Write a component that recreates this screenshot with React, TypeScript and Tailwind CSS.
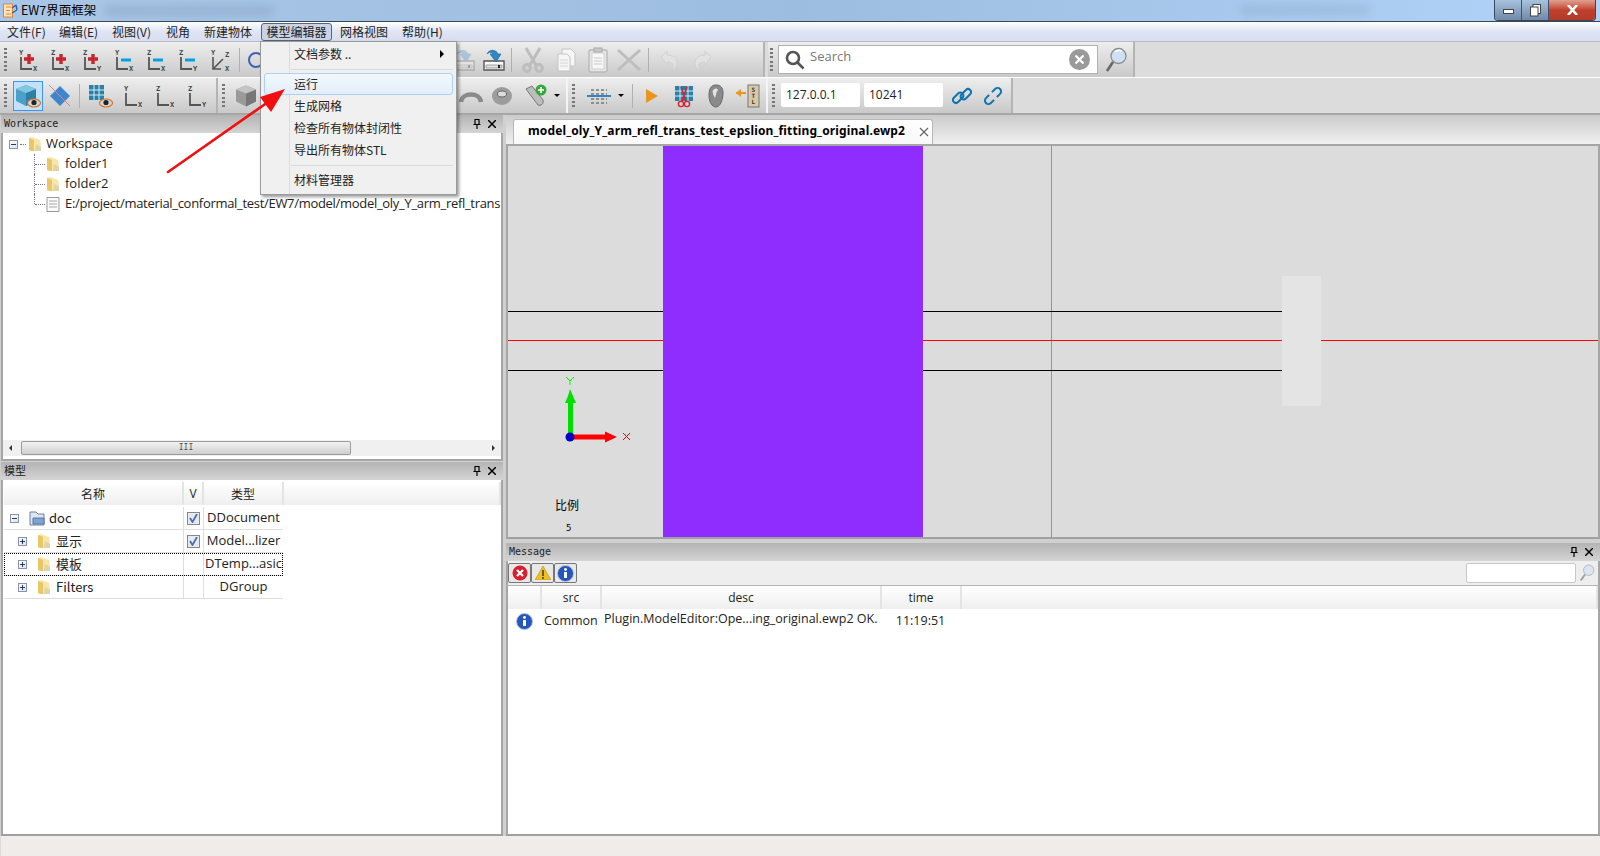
import { ReactNode } from "react";

const FONT = "[font-family:'Open_Sans','Noto_Sans_CJK_SC',sans-serif]";
const CJK = "[font-family:'Noto_Sans_CJK_SC','Open_Sans',sans-serif]";

function Grip() {
  return (
    <div className="flex h-[24px] w-[4px] flex-col justify-between">
      {[0, 1, 2, 3, 4, 5].map((i) => (
        <span key={i} className="h-[2px] w-[3px] bg-[#77777a]" />
      ))}
    </div>
  );
}

function Sep() {
  return <div className="mx-[2px] h-[24px] w-px bg-[#b0b0b0]" />;
}

function DropArrow() {
  return <div className="h-0 w-0 border-x-[3px] border-t-[3px] border-x-transparent border-t-black" />;
}

function AxisIcon({ v, h, sign }: { v: string; h: string; sign?: "plus" | "minus" | "diag" }) {
  return (
    <svg width="24" height="24" viewBox="0 0 24 24">
      <text x="3" y="7" fontSize="7" fontFamily="DejaVu Sans Mono" fontWeight="700" fill="#444">{v}</text>
      {sign === "diag" ? (
        <>
          <path d="M5 9v12h8M5 21l10-10" fill="none" stroke="#555" strokeWidth="1.6" />
          <text x="17" y="9" fontSize="7" fontFamily="DejaVu Sans Mono" fontWeight="700" fill="#444">Z</text>
        </>
      ) : (
        <path d="M5 9v12h11" fill="none" stroke="#555" strokeWidth="1.8" />
      )}
      <text x="17" y="23" fontSize="7" fontFamily="DejaVu Sans Mono" fontWeight="700" fill="#444">{h}</text>
      {sign === "plus" && <path d="M13 6v10M8 11h10" stroke="#c1272d" strokeWidth="3.4" />}
      {sign === "minus" && <path d="M9 12h10" stroke="#00a0e3" strokeWidth="3" />}
    </svg>
  );
}

function Eye() {
  return (
    <g>
      <ellipse cx="19" cy="19" rx="6.5" ry="4" fill="#cdd8dd" stroke="#e0701c" strokeWidth="1.2" />
      <circle cx="19" cy="18.5" r="2.6" fill="#222" />
    </g>
  );
}

function Cube({ c1, c2, c3 }: { c1: string; c2: string; c3: string }) {
  return (
    <g>
      <path d="M11 1l10 4v12l-10 5L1 17V5z" fill={c1} />
      <path d="M11 9l10-4v12l-10 5z" fill={c2} />
      <path d="M11 9L1 5l10-4 10 4z" fill={c3} />
    </g>
  );
}

function Cut({ color = "#bdbdbd" }: { color?: string }) {
  return (
    <svg width="24" height="26" viewBox="0 0 24 26" fill="none" stroke={color} strokeWidth="3">
      <path d="M5 1l10 17M19 1L9 18" />
      <circle cx="6" cy="21" r="3.4" />
      <circle cx="18" cy="21" r="3.4" />
    </svg>
  );
}

function Save({ faded }: { faded?: boolean }) {
  return (
    <svg width="24" height="24" viewBox="0 0 24 24" className={faded ? "opacity-30" : ""}>
      <path d="M2 13h20v9H2z" fill="#fff" stroke="#555" strokeWidth="1.4" />
      <path d="M4 17h16v3H4z" fill="#e4e4e4" stroke="#777" strokeWidth=".7" />
      <path d="M16 17h2v3h-2z" fill="#222" />
      <path d="M5 6c2-5 9-5 11 0h3l-5 8-6-8h3c-1-2-4-2-6 0z" fill="#2f86c5" stroke="#1d6396" strokeWidth=".6" />
    </svg>
  );
}

function PageIcon() {
  return (
    <svg width="20" height="24" viewBox="0 0 20 24" fill="none">
      <path d="M5 1h9l4 4v13H5z" fill="#f6f6f6" stroke="#c4c4c4" />
      <path d="M1 6h9l3 3v14H1z" fill="#f6f6f6" stroke="#c4c4c4" />
      <path d="M3 12h8M3 15h8M3 18h8" stroke="#d4d4d4" />
    </svg>
  );
}

function Paste() {
  return (
    <svg width="20" height="26" viewBox="0 0 20 26" fill="none">
      <rect x="1" y="3" width="18" height="22" rx="2" fill="#e6e6e6" stroke="#b8b8b8" strokeWidth="1.4" />
      <rect x="4" y="6" width="12" height="16" fill="#f8f8f8" stroke="#cfcfcf" />
      <rect x="6" y="1" width="8" height="4" fill="#c8c8c8" stroke="#aaa" />
      <path d="M6 11h8M6 14h8M6 17h8" stroke="#c8c8c8" />
    </svg>
  );
}

function CurveArrow({ flip }: { flip?: boolean }) {
  return (
    <svg width="20" height="22" viewBox="0 0 20 22" className={flip ? "-scale-x-100" : ""} fill="none">
      <path d="M2 8l6-6v4c6 0 10 3 10 8s-3 6-6 7c2-2 3-4 2-6-1-1-3-2-6-2v3z" fill="#e2e2e2" stroke="#d0d0d0" />
    </svg>
  );
}

function Magnifier({ faint }: { faint?: boolean }) {
  return (
    <svg width="22" height="26" viewBox="0 0 22 26" className={faint ? "opacity-60" : ""}>
      <circle cx="13.5" cy="9" r="7.5" fill="#cfe0f5" stroke="#8d8d8d" strokeWidth="1.3" />
      <path d="M10 5c2-2 5-2 7-1" stroke="#fff" strokeWidth="1.5" fill="none" />
      <path d="M8 15L2 24" stroke="#666" strokeWidth="2.6" />
    </svg>
  );
}

function LinkIcon({ broken }: { broken?: boolean }) {
  return (
    <svg width="20" height="20" viewBox="0 0 20 20" fill="none" stroke="#0f75b0" strokeWidth="2">
      {broken ? (
        <g transform="rotate(-45 10 10)">
          <path d="M8 6.5H3.5a3.5 3.5 0 0 0 0 7H8" />
          <path d="M12 6.5h4.500a3.500 3.500 0 0 1 0 7H12" />
        </g>
      ) : (
        <g transform="rotate(-45 10 10)">
          <rect x="0" y="5.500" width="12" height="6" rx="3" />
          <rect x="8" y="8.500" width="12" height="6" rx="3" />
        </g>
      )}
    </svg>
  );
}

function Tool({ w = 32, children }: { w?: number; children: ReactNode }) {
  return (
    <div className="flex h-[30px] shrink-0 items-center justify-center" style={{ width: w }}>
      {children}
    </div>
  );
}

function ToolBar({ width, children }: { width: number; children: ReactNode }) {
  return (
    <div
      className="flex h-full shrink-0 items-center border-r-2 border-r-[#b4b4b4] bg-gradient-to-b from-[#eeeeee] to-[#c9c9c9] pl-[4px]"
      style={{ width }}
    >
      {children}
    </div>
  );
}

function FolderIcon() {
  return (
    <svg width="14" height="16" viewBox="0 0 14 16">
      <path d="M1 2l3-1 8 3c1 3 1 8 1 11H4L1 14z" fill="#f7e6a6" />
      <path d="M4 3l2 1v11H4c-1 0-3-1-3-1V2z" fill="#e8c767" />
      <path d="M8 8l5 3v4H7z" fill="#d7cfae" opacity=".8" />
    </svg>
  );
}

function PanelTitle({ title, mono, close = true }: { title: string; mono?: boolean; close?: boolean }) {
  return (
    <div className="flex h-[18px] shrink-0 items-center justify-between bg-gradient-to-b from-[#b4b4b4] to-[#d4d4d4] pl-[3px] pr-[7px]">
      <span className={mono ? "-mt-[2px] font-['DejaVu_Sans_Mono',monospace] text-[10px] text-[#222]" : `-mt-[2px] ${CJK} text-[11px] text-[#222]`}>{title}</span>
      {close && (
        <div className="flex items-center gap-[7px]">
          <svg width="8" height="10" viewBox="0 0 8 10" fill="none" stroke="#000" strokeWidth="1.2">
            <path d="M2 .5h4v5H2zM.5 5.5h7M4 6v4" />
          </svg>
          <svg width="8" height="8" viewBox="0 0 8 8" stroke="#000" strokeWidth="1.5">
            <path d="M0 0l8 8M8 0L0 8" />
          </svg>
        </div>
      )}
    </div>
  );
}

function ExpandBox({ open }: { open?: boolean }) {
  return (
    <div className="relative h-[9px] w-[9px] shrink-0 border border-[#8a94a6] bg-gradient-to-br from-white to-[#dde2ea]">
      <span className="absolute left-[1px] top-[3px] h-px w-[5px] bg-[#1c3d6e]" />
      {!open && <span className="absolute left-[3px] top-[1px] h-[5px] w-px bg-[#1c3d6e]" />}
    </div>
  );
}

function TreeChild({ label, icon, last }: { label: string; icon: ReactNode; last?: boolean }) {
  return (
    <div className="relative flex h-[20px] items-center pl-[43px]">
      <span className={`absolute left-[31px] top-0 w-px border-l border-dotted border-[#777] ${last ? "h-[10px]" : "h-[20px]"}`} />
      <span className="absolute left-[32px] top-[10px] h-px w-[10px] border-t border-dotted border-[#777]" />
      <span className="flex w-[19px] shrink-0 justify-start">{icon}</span>
      <span className={`whitespace-nowrap text-[13px] text-[#222] ${last ? "tracking-[-0.3px]" : ""}`}>{label}</span>
    </div>
  );
}

function Check() {
  return (
    <div className="flex h-[13px] w-[13px] items-center justify-center border border-[#888] bg-[#e8e8f0]">
      <svg width="9" height="9" viewBox="0 0 9 9" fill="none" stroke="#4a6fb0" strokeWidth="1.8">
        <path d="M1 4l2.5 4L8 0" />
      </svg>
    </div>
  );
}

function ModelRow({ name, type, level, checked, open, icon, selected }: {
  name: string; type: string; level: number; checked?: boolean; open?: boolean; icon: ReactNode; selected?: boolean;
}) {
  return (
    <div className={`flex h-[23px] w-[279px] items-center border-b border-[#dedede] text-[13px] text-[#222] ${selected ? "outline-1 -outline-offset-1 outline-dotted outline-black" : ""}`}>
      <div className={`flex h-full w-[180px] shrink-0 items-center border-r border-[#dedede] ${level === 0 ? "pl-[6px]" : "pl-[14px]"}`}>
        <ExpandBox open={open} />
        <span className={`flex justify-center ${level === 0 ? "ml-[8px] w-[20px]" : "ml-[9px] w-[16px]"}`}>{icon}</span>
        <span className={`${level === 0 ? "ml-[2px]" : "ml-[4px]"} ${CJK}`}>{name}</span>
      </div>
      <div className="flex h-full w-[20px] shrink-0 items-center justify-center border-r border-[#dedede]">
        {checked && <Check />}
      </div>
      <div className="flex h-full flex-1 items-center justify-center whitespace-nowrap">{type}</div>
    </div>
  );
}

function HeaderCell({ width, children }: { width?: number; children?: ReactNode }) {
  return (
    <div
      className={`flex h-full items-center justify-center border-r-2 border-[#e4e4e4] text-[12px] text-[#222] ${width ? "shrink-0" : "flex-1 border-r-0"}`}
      style={width ? { width } : undefined}
    >
      {children}
    </div>
  );
}

function InfoIcon({ size = 17 }: { size?: number }) {
  return (
    <svg width={size} height={size} viewBox="0 0 17 17">
      <circle cx="8.5" cy="8.5" r="8" fill="#2555c0" stroke="#b8c4de" />
      <circle cx="8.5" cy="4.5" r="1.4" fill="#fff" />
      <path d="M7 7h3v6H7z" fill="#fff" />
    </svg>
  );
}

function MenuRow({ label, active, arrow }: { label: string; active?: boolean; arrow?: boolean }) {
  return (
    <div className={`relative mx-[3px] flex h-[22px] items-center rounded-[3px] text-[12px] text-[#222] ${active ? "border border-[#aed0f2] bg-gradient-to-b from-[#f2f7fd] to-[#e3eefa] pl-[29px]" : "pl-[30px]"}`}>
      {label}
      {arrow && <span className="absolute right-[9px] h-0 w-0 border-y-[4px] border-l-[4px] border-y-transparent border-l-black" />}
    </div>
  );
}

function MenuSep() {
  return <div className="my-[3.5px] ml-[30px] mr-[3px] h-px bg-[#d9d9d9]" />;
}

const menus = [
  { label: "文件(F)", w: 52 },
  { label: "编辑(E)", w: 53 },
  { label: "视图(V)", w: 54 },
  { label: "视角", w: 38 },
  { label: "新建物体", w: 57 },
];

export default function App() {
  return (
    <div className={`relative flex h-[856px] w-[1600px] flex-col overflow-hidden bg-[#dcdcdc] ${FONT}`}>
      {/* title bar */}
      <div className="relative flex h-[21px] shrink-0 items-center bg-gradient-to-r from-[#a9c6e6] via-[#9dbde0] to-[#b0d3f7] pl-[3px]">
        <svg width="15" height="15" viewBox="0 0 15 15">
          <rect x=".5" y="1" width="9" height="13" fill="#fbe3c0" stroke="#e8841c" />
          <path d="M3 4h5M3 7.5h4M3 11h5" stroke="#e8841c" strokeWidth="1.2" />
          <path d="M9 5l4-3M9 10l5-3M13 2l1 5" stroke="#2a5fb0" strokeWidth="1.4" />
        </svg>
        <span className={`ml-[3px] -mt-[1px] text-[12.5px] text-black ${CJK}`}>EW7界面框架</span>
        <div className="ml-[8px] h-[10px] w-[170px] rounded-full bg-[#7e9abb] opacity-40 blur-[4px]" />
        <div className="absolute left-[1240px] top-[5px] h-[10px] w-[130px] rounded-full bg-[#7e9abb] opacity-30 blur-[4px]" />
        <div className="absolute right-[4px] top-0 flex h-[21px] w-[102px] overflow-hidden rounded-b-[4px] border border-t-0 border-[#39485c]">
          <div className="flex w-[27px] items-center justify-center border-r border-[#41516a] bg-gradient-to-b from-[#a9c2de] to-[#6f8aa9]">
            <span className="mt-[3px] h-[5px] w-[11px] border border-[#444] bg-white" />
          </div>
          <div className="flex w-[27px] items-center justify-center border-r border-[#41516a] bg-gradient-to-b from-[#a9c2de] to-[#6f8aa9]">
            <svg width="11" height="13" viewBox="0 0 11 13" fill="#fff" stroke="#444">
              <rect x="3" y=".5" width="7.5" height="9" />
              <rect x=".5" y="3" width="7.5" height="9" />
            </svg>
          </div>
          <div className="flex flex-1 items-center justify-center bg-gradient-to-b from-[#e0a090] via-[#c1402c] to-[#b33a28]">
            <svg width="11" height="10" viewBox="0 0 11 10" stroke="#fff" strokeWidth="2.6">
              <path d="M1 0l9 10M10 0L1 10" />
            </svg>
          </div>
        </div>
      </div>

      {/* menu bar */}
      <div className="flex h-[20px] shrink-0 items-center border-t border-[#3a4656] bg-gradient-to-b from-[#ffffff] via-[#dfe5f4] to-[#d8def0] pl-[7px] text-[12px] text-[#222]">
        {menus.map((m) => (
          <span key={m.label} className={`shrink-0 whitespace-nowrap ${CJK}`} style={{ width: m.w }}>{m.label}</span>
        ))}
        <span className={`ml-[0px] flex h-[18px] w-[71px] shrink-0 items-center justify-center rounded-[3px] border border-[#56667a] bg-[#c9d3e6] ${CJK}`}>模型编辑器</span>
        <span className={`ml-[8px] w-[62px] shrink-0 ${CJK}`}>网格视图</span>
        <span className={`shrink-0 ${CJK}`}>帮助(H)</span>
      </div>

      {/* toolbar row 1 */}
      <div className="flex h-[36px] shrink-0 border-t border-[#b8bcc8]">
        <ToolBar width={765}>
          <Grip />
          <div className="ml-[4px] flex items-center">
            <Tool><AxisIcon v="Y" h="X" sign="plus" /></Tool>
            <Tool><AxisIcon v="Z" h="X" sign="plus" /></Tool>
            <Tool><AxisIcon v="Z" h="Y" sign="plus" /></Tool>
            <Tool><AxisIcon v="Y" h="X" sign="minus" /></Tool>
            <Tool><AxisIcon v="Z" h="X" sign="minus" /></Tool>
            <Tool><AxisIcon v="Z" h="Y" sign="minus" /></Tool>
            <Tool><AxisIcon v="Y" h="X" sign="diag" /></Tool>
          </div>
          <div className="ml-[1px]"><Sep /></div>
          <Tool w={28}>
            <svg width="20" height="20" viewBox="0 0 20 20" fill="none" stroke="#3f62b5" strokeWidth="2"><circle cx="10" cy="10" r="7" /></svg>
          </Tool>
          <div className="ml-[179px] flex items-center">
            <Tool w={30}><Save faded /></Tool>
            <Tool w={30}><Save /></Tool>
          </div>
          <Sep />
          <div className="ml-[2px] flex items-center">
            <Tool w={34}><Cut /></Tool>
            <Tool w={33}><PageIcon /></Tool>
            <Tool w={30}><Paste /></Tool>
            <Tool w={32}>
              <svg width="26" height="24" viewBox="0 0 26 24" stroke="#bdbdbd" strokeWidth="3"><path d="M2 2l22 20M24 2L2 22" /></svg>
            </Tool>
          </div>
          <div className="ml-[1px]"><Sep /></div>
          <Tool w={36}><CurveArrow /></Tool>
          <Tool w={32}><CurveArrow flip /></Tool>
        </ToolBar>
        <div className="ml-[3px] flex h-full w-[367px] shrink-0 items-center border-r-2 border-[#b4b4b4] bg-gradient-to-b from-[#eeeeee] to-[#c9c9c9] pl-[2px]">
          <Grip />
          <div className="ml-[4px] flex h-[29px] w-[320px] shrink-0 items-center border border-[#b0b0b0] bg-white pl-[6px] pr-[7px]">
            <svg width="20" height="20" viewBox="0 0 20 20" fill="none" stroke="#555" strokeWidth="2.6">
              <circle cx="8" cy="8" r="6" />
              <path d="M12.5 12.500l6 6" />
            </svg>
            <span className="ml-[5px] -mt-[6px] text-[13px] text-[#777]">Search</span>
            <svg className="ml-auto" width="21" height="21" viewBox="0 0 21 21">
              <circle cx="10.5" cy="10.5" r="10.5" fill="#9a9a9a" />
              <path d="M6.5 6.5l8 8M14.5 6.5l-8 8" stroke="#fff" strokeWidth="2.2" />
            </svg>
          </div>
          <div className="ml-[7px]"><Magnifier /></div>
        </div>
      </div>

      {/* toolbar row 2 */}
      <div className="flex h-[36px] shrink-0 border-t border-white">
        <ToolBar width={218}>
          <Grip />
          <div className="ml-[5px] flex h-[30px] w-[30px] shrink-0 items-center justify-center border border-[#3399ff] bg-[#c4e0fa]">
            <svg width="26" height="24" viewBox="0 0 26 24"><Cube c1="#4aa0c8" c2="#2e7fa8" c3="#7fc8de" /><Eye /></svg>
          </div>
          <Tool w={34}>
            <svg width="24" height="24" viewBox="0 0 24 24">
              <path d="M12 2l10 10-10 10L2 12z" fill="#3d86cc" />
              <path d="M1 1l21 21" stroke="#e87c8c" strokeWidth="1" />
            </svg>
          </Tool>
          <Sep />
          <Tool w={35}>
            <svg width="26" height="24" viewBox="0 0 26 24">
              <rect x="2" y="1" width="15" height="15" fill="#2b7fa8" />
              <path d="M7 1v15M12 1v15M2 6h15M2 11h15" stroke="#d8eef5" strokeWidth="1" />
              <Eye />
            </svg>
          </Tool>
          <Tool><AxisIcon v="Y" h="X" /></Tool>
          <Tool><AxisIcon v="Z" h="X" /></Tool>
          <Tool><AxisIcon v="Z" h="Y" /></Tool>
        </ToolBar>
        <div className="flex h-full w-[350px] shrink-0 items-center border-r-2 border-[#f4f4f4] bg-gradient-to-b from-[#eeeeee] to-[#c9c9c9] pl-[4px]">
          <Grip />
          <Tool w={40}>
            <svg width="22" height="24" viewBox="0 0 22 23"><Cube c1="#9a9a9a" c2="#777" c3="#c4c4c4" /></svg>
          </Tool>
          <div className="ml-[190px] flex items-center">
            <Tool w={30}>
              <svg width="24" height="16" viewBox="0 0 24 16" fill="none">
                <path d="M2 14C3 4 21 4 22 14" stroke="#8a8a8a" strokeWidth="4.5" />
              </svg>
            </Tool>
            <Tool w={32}>
              <svg width="22" height="20" viewBox="0 0 22 20">
                <ellipse cx="11" cy="10" rx="10" ry="9" fill="#9c9c9c" />
                <ellipse cx="11" cy="8" rx="4.5" ry="3" fill="#dcdcdc" stroke="#666" />
              </svg>
            </Tool>
            <Tool w={36}>
              <svg width="24" height="24" viewBox="0 0 24 24">
                <path d="M2 5l6-3 11 14c1 4-2 6-5 5z" fill="#bdbdbd" stroke="#777" />
                <circle cx="17" cy="6" r="5.5" fill="#39a83b" />
                <path d="M14 6h6M17 3v6" stroke="#fff" strokeWidth="1.6" />
              </svg>
            </Tool>
            <DropArrow />
          </div>
        </div>
        <div className="flex h-full w-[200px] shrink-0 items-center border-r-2 border-[#f4f4f4] bg-gradient-to-b from-[#eeeeee] to-[#c9c9c9] pl-[4px]">
          <Grip />
          <div className="ml-[4px]">
            <Tool w={38}>
              <svg width="24" height="18" viewBox="0 0 24 18">
                <path d="M0 9h24" stroke="#2f86c5" strokeWidth="2" />
                <path d="M4 3h16M4 7h16M4 12h16M4 16h16" stroke="#777" strokeWidth="1.4" strokeDasharray="3 2" />
              </svg>
            </Tool>
          </div>
          <DropArrow />
          <div className="ml-[6px]"><Sep /></div>
          <Tool w={34}>
            <div className="h-0 w-0 border-y-[7px] border-l-[12px] border-y-transparent border-l-[#e8961e]" />
          </Tool>
          <Tool w={30}>
            <svg width="20" height="24" viewBox="0 0 20 24">
              <rect x="1" y="2" width="18" height="15" fill="#2b7fa8" />
              <path d="M6 2v15M14 2v15M1 7h18M1 12h18" stroke="#d8eef5" />
              <path d="M7 3l5 14M13 3L8 17" stroke="#d8202c" strokeWidth="1.4" />
              <circle cx="7" cy="20" r="2.6" fill="none" stroke="#d8202c" strokeWidth="1.4" />
              <circle cx="13" cy="20" r="2.6" fill="none" stroke="#d8202c" strokeWidth="1.4" />
            </svg>
          </Tool>
          <Tool w={34}>
            <svg width="16" height="24" viewBox="0 0 16 24">
              <path d="M8 1c5 0 7 3 7 8 0 7-3 14-7 14S1 18 1 11C1 5 3 1 8 1z" fill="#8a8a8a" stroke="#666" />
              <path d="M5 6c2-2 4-2 5 0-2 2-2 6-3 8-1-2-3-5-2-8z" fill="#e4e4e4" />
            </svg>
          </Tool>
          <Tool w={30}>
            <svg width="24" height="24" viewBox="0 0 24 24">
              <rect x="12" y="1" width="11" height="22" fill="#d9c9a8" stroke="#777" />
              <text x="15.5" y="8" fontSize="6" fontFamily="DejaVu Sans Mono" fontWeight="700" fill="#333">S</text>
              <text x="15.5" y="14" fontSize="6" fontFamily="DejaVu Sans Mono" fontWeight="700" fill="#333">T</text>
              <text x="15.5" y="20" fontSize="6" fontFamily="DejaVu Sans Mono" fontWeight="700" fill="#333">L</text>
              <path d="M0 9h10" stroke="#e8961e" strokeWidth="2" />
              <path d="M5 5L0 9l5 4z" fill="#e8961e" />
            </svg>
          </Tool>
        </div>
        <div className="flex h-full w-[245px] shrink-0 items-center border-r-2 border-[#b4b4b4] bg-gradient-to-b from-[#eeeeee] to-[#c9c9c9] pl-[4px]">
          <Grip />
          <div className="ml-[5px] -mt-[1px] flex h-[24px] w-[79px] shrink-0 items-center rounded-[2px] bg-white pl-[5px] text-[12px] text-[#222]">127.0.0.1</div>
          <div className="ml-[4px] -mt-[1px] flex h-[24px] w-[79px] shrink-0 items-center rounded-[2px] bg-white pl-[5px] text-[12px] text-[#222]">10241</div>
          <Tool w={37}><LinkIcon /></Tool>
          <Tool w={26}><LinkIcon broken /></Tool>
        </div>
      </div>

      {/* main */}
      <div className="flex min-h-0 flex-1 border-t-2 border-[#a6a6a6] bg-[#d0d0d0]">
        {/* left column */}
        <div className="flex w-[503px] shrink-0 flex-col pl-[1px]">
          <div className="flex h-[346px] shrink-0 flex-col border-b-2 border-[#a6a6a6]">
            <PanelTitle title="Workspace" mono />
            <div className="flex min-h-0 flex-1 flex-col border-x-2 border-x-[#a6a6a6] bg-white pb-[3px] pt-[1px]">
              <div className="relative flex-1 overflow-hidden">
                <div className="flex h-[20px] items-center pl-[6px]">
                  <ExpandBox open />
                  <span className="ml-[2px] h-px w-[6px] border-t border-dotted border-[#777]" />
                  <span className="ml-[2px] w-[18px]"><FolderIcon /></span>
                  <span className="text-[13px] text-[#222]">Workspace</span>
                </div>
                <TreeChild label="folder1" icon={<FolderIcon />} />
                <TreeChild label="folder2" icon={<FolderIcon />} />
                <TreeChild
                  last
                  label="E:/project/material_conformal_test/EW7/model/model_oly_Y_arm_refl_trans"
                  icon={
                    <svg width="14" height="15" viewBox="0 0 14 15" fill="none">
                      <path d="M1 .5h12v14H1z" fill="#fafafa" stroke="#999" />
                      <path d="M3 4h8M3 7h8M3 10h8" stroke="#aaa" />
                    </svg>
                  }
                />
              </div>
              <div className="flex h-[16px] shrink-0 items-center bg-[#f0f0f0] pl-[6px]">
                <span className="h-0 w-0 border-y-[3px] border-r-[3px] border-y-transparent border-r-[#333]" />
                <div className="ml-[9px] flex h-[14px] w-[330px] shrink-0 items-center justify-center rounded-[2px] border border-[#9a9a9a] bg-gradient-to-b from-[#f2f2f2] to-[#cfcfcf]">
                  <span className="font-['DejaVu_Sans_Mono',monospace] text-[8px] text-[#555]">III</span>
                </div>
                <span className="ml-auto mr-[6px] h-0 w-0 border-y-[3px] border-l-[3px] border-y-transparent border-l-[#333]" />
              </div>
            </div>
          </div>
          <div className="mt-[1px] flex min-h-0 flex-1 flex-col border-b-2 border-[#a0a0a0]">
            <PanelTitle title="模型" />
            <div className="flex-1 border-x-2 border-x-[#a6a6a6] bg-white pl-[1px]">
              <div className="mt-[2px] flex h-[23px] bg-gradient-to-b from-white to-[#efefef]">
                <HeaderCell width={180}><span className={CJK}>名称</span></HeaderCell>
                <HeaderCell width={20}>V</HeaderCell>
                <HeaderCell width={80}><span className={CJK}>类型</span></HeaderCell>
                <HeaderCell />
              </div>
              <div className="mt-[2px]">
                <ModelRow
                  name="doc"
                  type="DDocument"
                  level={0}
                  checked
                  open
                  icon={
                    <svg width="16" height="15" viewBox="0 0 16 15">
                      <path d="M1 1h6l2 2h6v11H1z" fill="#dfe6f2" stroke="#6b7f9c" />
                      <path d="M4 7h11v6H4z" fill="#7ea3d6" stroke="#5778a6" />
                    </svg>
                  }
                />
                <ModelRow name="显示" type="Model...lizer" level={1} checked icon={<FolderIcon />} />
                <ModelRow name="模板" type="DTemp...asic" level={1} selected icon={<FolderIcon />} />
                <ModelRow name="Filters" type="DGroup" level={1} icon={<FolderIcon />} />
              </div>
            </div>
          </div>
        </div>

        {/* right column */}
        <div className="ml-[3px] flex min-w-0 flex-1 flex-col">
          <div className="flex h-[29px] shrink-0 items-end bg-gradient-to-b from-[#cbcbcb] to-[#f0f0f0] pl-[7px]">
            <div className="flex h-[25px] w-[420px] items-center rounded-t-[3px] border border-b-0 border-[#b8b8b8] bg-gradient-to-b from-white to-[#f8f8f8] pl-[14px] pr-[3px]">
              <span className="-mt-[2px] whitespace-nowrap text-[12px] font-bold tracking-[0.13px] text-black [font-family:'Noto_Sans',sans-serif]">model_oly_Y_arm_refl_trans_test_epslion_fitting_original.ewp2</span>
              <svg className="ml-auto" width="10" height="10" viewBox="0 0 10 10" stroke="#666" strokeWidth="1.2">
                <path d="M1 1l8 8M9 1L1 9" />
              </svg>
            </div>
          </div>
          <div className="relative h-[395px] shrink-0 overflow-hidden border-x-2 border-y-2 border-x-[#a6a6a6] border-t-[#a6a6a6] border-b-[#a0a0a0] bg-[#dcdcdc]">
            <div className="absolute left-[543px] top-0 h-full w-px bg-[#00ff00]" />
            <div className="absolute left-0 top-[165px] h-px w-[774px] bg-black" />
            <div className="absolute left-0 top-[194px] h-px w-full bg-[#ff0000]" />
            <div className="absolute left-0 top-[224px] h-px w-[774px] bg-black" />
            <div className="absolute left-[774px] top-[130px] h-[130px] w-[39px] bg-[#e4e4e4]" />
            <div className="absolute left-[155px] top-0 h-full w-[260px] bg-[#8f2cff]" />
            <svg className="absolute left-[55px] top-[230px]" width="75" height="70" viewBox="0 0 75 70">
              <path d="M3 1l4 4 4-4M7 5v4" fill="none" stroke="#00ff00" />
              <path d="M7 13l-2 7-3 7h3v33h5V27h3l-3-7z" fill="#00e000" />
              <path d="M7 58.500h35v-3l12 5.500-12 5.500v-3H7z" fill="#ff0000" />
              <circle cx="7" cy="61" r="4.5" fill="#0000c8" />
              <path d="M60 57l7 7M67 57l-7 7" stroke="#ff0000" />
            </svg>
            <span className={`absolute left-[47px] top-[350px] text-[12px] text-black ${CJK}`}>比例</span>
            <span className="absolute left-[58px] top-[376px] font-['DejaVu_Sans_Mono',monospace] text-[9px] text-black">5</span>
          </div>
          <div className="mt-[4px] flex min-h-0 flex-1 flex-col border-b-2 border-[#a0a0a0]">
            <PanelTitle title="Message" mono />
            <div className="flex h-[24px] shrink-0 items-center justify-between border-x-2 border-[#a6a6a6] bg-[#eeeeee] pr-[3px]">
              <div className="flex">
                <div className="flex h-[20px] w-[23px] items-center justify-center rounded-[2px] border border-[#777] bg-[#e8e8e8]">
                  <svg width="16" height="16" viewBox="0 0 16 16">
                    <circle cx="8" cy="8" r="7.5" fill="#d8202c" />
                    <path d="M5 5l6 6M11 5l-6 6" stroke="#fff" strokeWidth="2.2" />
                  </svg>
                </div>
                <div className="flex h-[20px] w-[23px] items-center justify-center rounded-[2px] border border-[#777] bg-[#e8e8e8]">
                  <svg width="16" height="14" viewBox="0 0 16 14">
                    <path d="M8 0l8 14H0z" fill="#f0c020" stroke="#c09010" strokeWidth=".6" />
                    <path d="M8 4v6M8 11v2" stroke="#333" strokeWidth="1.4" />
                  </svg>
                </div>
                <div className="flex h-[20px] w-[23px] items-center justify-center rounded-[2px] border border-[#777] bg-[#e8e8e8]">
                  <InfoIcon />
                </div>
              </div>
              <div className="flex items-center gap-[3px]">
                <div className="h-[20px] w-[110px] rounded-[2px] border border-[#c8c8c8] bg-white" />
                <div className="-mt-[1px] flex h-[20px] items-center"><svg width="16" height="18" viewBox="0 0 22 26" className="opacity-60"><circle cx="13.5" cy="9" r="7.5" fill="#cfe0f5" stroke="#8d8d8d" strokeWidth="1.3" /><path d="M8 15L2 24" stroke="#666" strokeWidth="2.6" /></svg></div>
              </div>
            </div>
            <div className="flex-1 border-x-2 border-x-[#a6a6a6] border-t border-t-[#b4b4b4] bg-white">
              <div className="flex h-[23px] bg-gradient-to-b from-white to-[#efefef]">
                <HeaderCell width={34} />
                <HeaderCell width={60}>src</HeaderCell>
                <HeaderCell width={280}>desc</HeaderCell>
                <HeaderCell width={80}>time</HeaderCell>
                <HeaderCell />
              </div>
              <div className="flex h-[24px] items-center text-[12.5px] text-[#222]">
                <div className="flex w-[32px] shrink-0 justify-center"><InfoIcon /></div>
                <div className="w-[60px] shrink-0 pl-[4px] pt-[1px]">Common</div>
                <div className="-mt-[4px] w-[280px] shrink-0 whitespace-nowrap pl-[4px]">Plugin.ModelEditor:Ope...ing_original.ewp2 OK.</div>
                <div className="w-[80px] shrink-0 pl-[1px] pt-[1px] text-center">11:19:51</div>
              </div>
            </div>
          </div>
        </div>
      </div>

      {/* status bar */}
      <div className="h-[20px] shrink-0 border-l border-[#dcdcdc] bg-[#f0ecea]" />

      {/* open menu */}
      <div className={`absolute left-[260px] top-[41px] h-[154px] w-[197px] border border-[#9a9a9a] bg-[#f0f0f0] pt-[1px] shadow-[2px_2px_3px_rgba(0,0,0,0.4)] ${CJK}`}>
        <div className="absolute bottom-0 left-[28px] top-0 w-px bg-[#dcdcdc]" />
        <MenuRow label="文档参数 .." arrow />
        <MenuSep />
        <MenuRow label="运行" active />
        <MenuRow label="生成网格" />
        <MenuRow label="检查所有物体封闭性" />
        <MenuRow label="导出所有物体STL" />
        <MenuSep />
        <MenuRow label="材料管理器" />
      </div>

      {/* annotation arrow */}
      <svg className="absolute left-[160px] top-[80px]" width="135" height="100" viewBox="0 0 135 100">
        <path d="M8 92L108 22" stroke="#f01010" strokeWidth="2.6" strokeLinecap="round" />
        <path d="M125 9L100 17l11 15z" fill="#f01010" />
      </svg>
    </div>
  );
}
